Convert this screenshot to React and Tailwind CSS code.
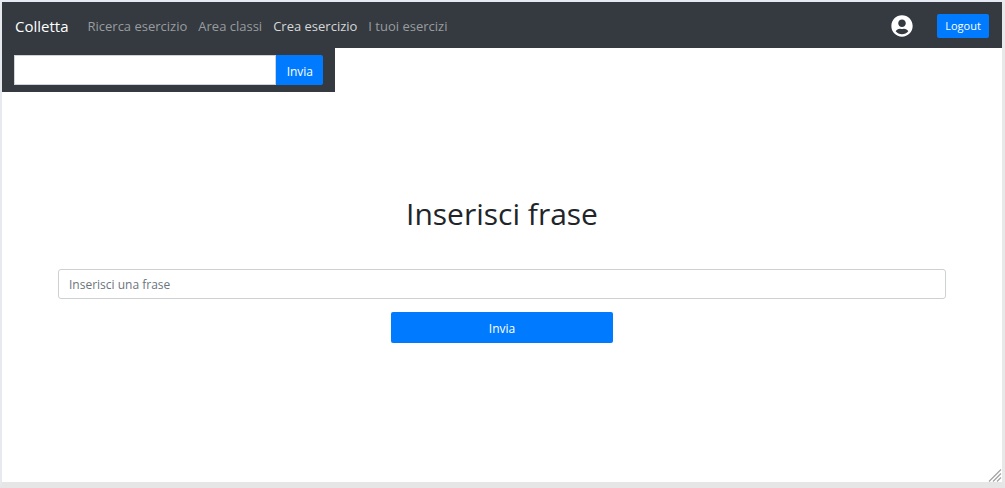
import { FaUserCircle } from "react-icons/fa";

const links = [
  { label: "Ricerca esercizio" },
  { label: "Area classi" },
  { label: "Crea esercizio", active: true },
  { label: "I tuoi esercizi" },
];

export default function App() {
  return (
    <div className="flex min-h-screen flex-col border-t-2 border-r-3 border-b-6 border-l-2 border-t-[#e6ebf3] border-r-[#e8e8e8] border-b-[#e6e6e6] border-l-[#e6e9ee] bg-white font-['Open_Sans','Noto_Sans',sans-serif] text-[#212529]">
      <header>
        <nav className="flex h-[46px] items-center bg-[#343a40] px-[13px] pt-0.5">
          <a href="#home" className="mr-[19px] text-[15px] text-white">
            Colletta
          </a>
          <ul className="flex gap-[11px] pt-0.5 text-[13px]">
            {links.map((link) => (
              <li key={link.label}>
                <a
                  href="#nav"
                  className={link.active ? "text-[#d6d8d9]" : "text-[#999c9f]"}
                >
                  {link.label}
                </a>
              </li>
            ))}
          </ul>
          <a href="#profile" aria-label="Profilo" className="ml-auto text-white">
            <FaUserCircle size={22} />
          </a>
          <button
            type="button"
            className="ml-6 h-6 w-[52px] rounded-xs bg-[#007bff] text-[11px] text-white"
          >
            Logout
          </button>
        </nav>
        <form className="flex h-11 w-1/3 bg-[#343a40] px-3 pt-[7px] pb-[7px]">
          <input
            type="text"
            aria-label="Cerca"
            className="min-w-0 flex-1 border border-[#ced4da] bg-white px-2 text-[12px]"
          />
          <button
            type="button"
            className="w-[47px] rounded-r-xs bg-[#007bff] pt-1 text-[12px] text-white"
          >
            Invia
          </button>
        </form>
      </header>
      <main className="flex flex-1 flex-col items-center px-14 pt-[104px]">
        <h1 className="text-[30px] leading-9">Inserisci frase</h1>
        <form className="mt-[37px] flex w-full flex-col items-center gap-[13px]">
          <input
            type="text"
            aria-label="Frase"
            placeholder="Inserisci una frase"
            className="h-[30px] w-full rounded-[3px] border border-[#ced0d2] px-2.5 text-[12px] placeholder:text-[#6c757d]"
          />
          <button
            type="button"
            className="h-[31px] w-1/4 rounded-xs bg-[#007bff] pt-0.5 text-[12px] text-white"
          >
            Invia
          </button>
        </form>
      </main>
      <svg
        className="self-end"
        width="14"
        height="14"
        viewBox="0 0 14 14"
        stroke="#a3a3a3"
        strokeWidth="1.2"
        aria-hidden="true"
      >
        <path d="M1 13.5L13 1.5M5 13.5L13 5.5M9 13.5L13 9.5" />
      </svg>
    </div>
  );
}
